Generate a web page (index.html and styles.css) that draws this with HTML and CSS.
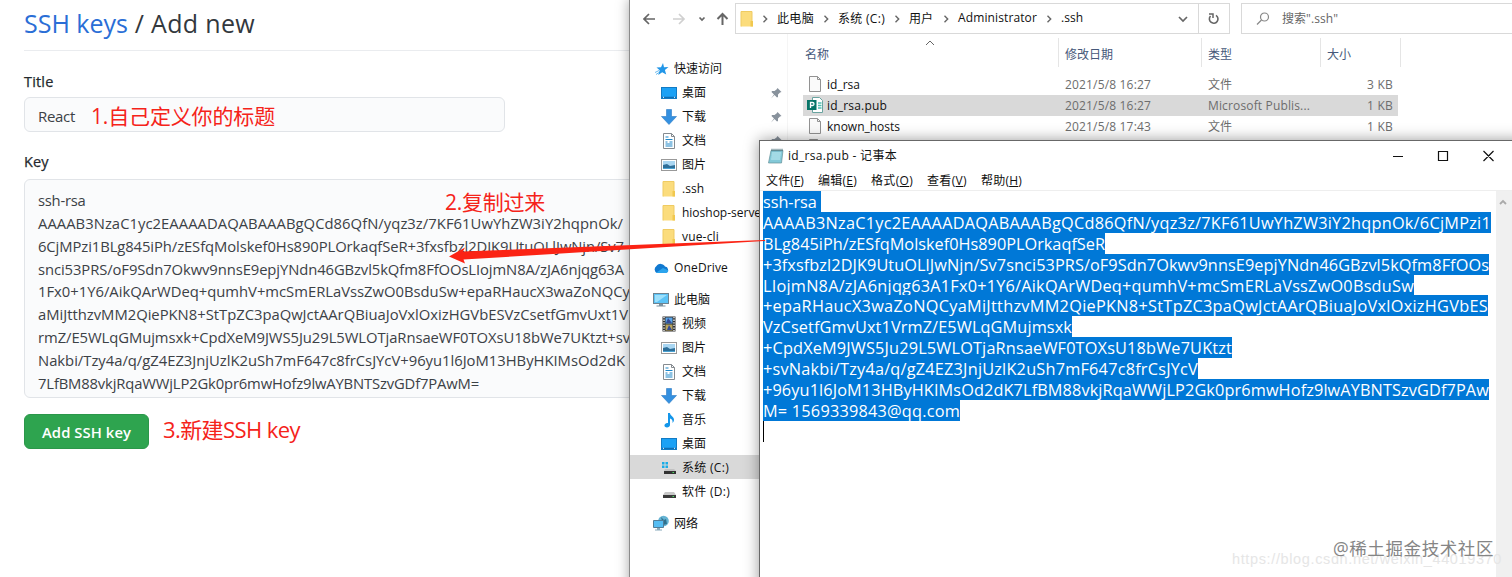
FILE: index.html
```html
<!DOCTYPE html>
<html lang="zh-CN">
<head>
<meta charset="utf-8">
<title>SSH keys</title>
<link rel="stylesheet" href="styles.css">
</head>
<body>
<svg class="sprite" width="0" height="0">
  <symbol id="star" viewBox="0 0 16 16"><path d="M10 2l1 4.300 4.500-.2-3.600 3 1.300 4.400-4-2.300-4 2.800 1.500-4.700L3.500 6.500l4.500-.2z" fill="#2196e8"/><path d="M2 11.500l4-2M3 13.500l3-2" stroke="#6cbcf0"/></symbol>
  <symbol id="desk" viewBox="0 0 16 16"><rect x=".5" y="2.500" width="15" height="11" fill="#1ba1f5" stroke="#127bc4"/><path d="M1 12.300h14" stroke="#0b62a4"/><path d="M2 12.300h1M13 12.300h1" stroke="#fff"/></symbol>
  <symbol id="down" viewBox="0 0 16 16"><path d="M5.500.5h5v7h5L8 15.500.5 7.500h5z" fill="#3490e0" stroke="#2a7bc4" stroke-width=".6"/></symbol>
  <symbol id="doc" viewBox="0 0 16 16"><path d="M2.500.5h8l3 3v12h-11z" fill="#fff" stroke="#858b90"/><path d="M4.500 4h3M4.500 6.500h7M4.500 9h2M8.500 9h3M4.500 11h7M4.500 13h7" stroke="#1d86c8" stroke-width="1.200"/><path d="M10.500.5v3h3" fill="none" stroke="#858b90"/></symbol>
  <symbol id="pic" viewBox="0 0 16 16"><rect x=".5" y="2.500" width="15" height="11" fill="#fff" stroke="#999"/><path d="M2 4h12v8H2z" fill="#a9d6f2"/><path d="M2 8l4-1 3 2 5-1v4H2z" fill="#2e6f99"/><path d="M2 11h12v1H2z" fill="#4ba2d2"/></symbol>
  <symbol id="folder" viewBox="0 0 16 16"><path d="M2 .5h11V10l1 .5v5H2z" fill="#fbdc7c"/><path d="M2 15.500V.5h11v9.500" fill="none" stroke="#efcb62"/><path d="M11.500 10h2.500v5.500h-2.500z" fill="#f1c84f"/></symbol>
  <symbol id="cloud" viewBox="0 0 16 16"><path d="M4 13a4 4 0 0 1-.5-7A5 5 0 0 1 12 6.500 3.400 3.400 0 0 1 13 13z" fill="#1179d0"/><path d="M3 12.700 10 8l5.500 2.500A3 3 0 0 1 13 13H4z" fill="#2ba4ed"/></symbol>
  <symbol id="pc" viewBox="0 0 16 16"><rect x=".5" y="1.500" width="15" height="10" fill="#5cc3f6" stroke="#6d8390"/><path d="M2 3h12L4 10H2z" fill="#9de0fb"/><path d="M6 12h4v1.500h2.500v1h-9v-1H6z" fill="#7e929e"/></symbol>
  <symbol id="video" viewBox="0 0 16 16"><path d="M1.500.5h13v15h-13z" fill="#333"/><path d="M3 1v14M13 1v14" stroke="#eee" stroke-width="1.400" stroke-dasharray="1.300 1.300"/><path d="M4.500 1.500h7v6h-7z" fill="#5ba6e8"/><path d="M4.500 8.500h7v6h-7z" fill="#b8a45d"/><path d="M7 2l4 5H5zM8 9l3 5H6z" fill="#354b96"/></symbol>
  <symbol id="music" viewBox="0 0 16 16"><path d="M7 1h2c0 3 4 3.500 4 7 0 1-.5 2-1.500 3 .5-3-1-4-2.500-4.500V13c0 1.500-1.500 2.500-3 2.500S3 14.500 3.500 13 5.500 11 7 11z" fill="#1496ea"/></symbol>
  <symbol id="cdrive" viewBox="0 0 16 16"><path d="M1 2h2.500v2.500H1zM4.500 2H7v2.500H4.500zM1 5.500h2.500V8H1zM4.500 5.500H7V8H4.500z" fill="#19ace7"/><path d="M4 9h9l2 2H3z" fill="#c2c2c2"/><path d="M3 11h12v3H3z" fill="#333"/><path d="M11.500 12.500H13" stroke="#4be060"/></symbol>
  <symbol id="ddrive" viewBox="0 0 16 16"><path d="M4 8h9l2 3H2z" fill="#c8c8c8"/><path d="M2 11h13v3H2z" fill="#3a3a3a"/><path d="M11.500 12.500H13" stroke="#4be060"/></symbol>
  <symbol id="net" viewBox="0 0 16 16"><circle cx="10.500" cy="6" r="5.300" fill="#65b3d3"/><path d="M8 2l3 3 2-1 1 5-4 1z" fill="#2d708e"/><path d="M.5 5.500h10v7H.5z" fill="#55bdf3" stroke="#507d98"/><path d="M4 13h3v1.500h2v1H2v-1h2z" fill="#8ab"/></symbol>
  <symbol id="file" viewBox="0 0 16 16"><path d="M2.500.5h8l3 3v12h-11z" fill="#fafafa" stroke="#929292"/><path d="M10.500.5v3h3" fill="none" stroke="#929292"/></symbol>
  <symbol id="pub" viewBox="0 0 16 16"><path d="M5.500.5h7l3 3v12h-10z" fill="#fff" stroke="#6aa4a0"/><path d="M11 6h3.500M11 8.500h3.500M11 11h3.500" stroke="#4cbdb0" stroke-width="1.500"/><path d="M0 3h9.500v10H0z" fill="#077568"/><path d="M3.500 11V5.500h2a1.500 1.500 0 0 1 0 3h-2" fill="none" stroke="#fff" stroke-width="1.300"/></symbol>
  <symbol id="note" viewBox="0 0 16 16"><path d="M3 2.500h12L13.500 15H.5z" fill="#83c9d8" stroke="#648f98" stroke-width=".7"/><path d="M4 5h9M3.700 7h9M3.400 9h9M3.100 11h9" stroke="#c3eaf2"/><path d="M3.500 2h11.500" stroke="#456c76" stroke-width="2.500" stroke-dasharray="1 1"/></symbol>
  <symbol id="pin" viewBox="0 0 12 12"><path d="M7.500 1l4 4-1.500.5-2 2 0 2.500-1 .5L4.500 8 1 11.500 4 7.500 1.500 5 2 4h2.500l2-1.500z" fill="#88929c"/></symbol>
  <symbol id="chev" viewBox="0 0 8 8"><path d="M2.500.8 5.700 4 2.500 7.200" fill="none" stroke="#666" stroke-width="1.400"/></symbol>
</svg>

<main class="desktop">
  <section class="github">
    <h1 class="heading"><span data-w="104"><a>SSH keys</a></span><span data-w="127"> / Add new</span></h1>
    <label class="label"><span data-w="29.500">Title</span></label>
    <div class="input"><span data-w="37">React</span></div>
    <label class="label label-key"><span data-w="24.500">Key</span></label>
    <div class="textarea">
      <p><span data-w="47.500">ssh-rsa</span></p>
      <p><span data-w="585">AAAAB3NzaC1yc2EAAAADAQABAAABgQCd86QfN/yqz3z/7KF61UwYhZW3iY2hqpnOk/</span></p>
      <p><span data-w="586">6CjMPzi1BLg845iPh/zESfqMolskef0Hs890PLOrkaqfSeR+3fxsfbzl2DJK9UtuOLlJwNjn/Sv7</span></p>
      <p><span data-w="586">snci53PRS/oF9Sdn7Okwv9nnsE9epjYNdn46GBzvl5kQfm8FfOOsLIojmN8A/zJA6njqg63A</span></p>
      <p><span data-w="592">1Fx0+1Y6/AikQArWDeq+qumhV+mcSmERLaVssZwO0BsduSw+epaRHaucX3waZoNQCy</span></p>
      <p><span data-w="590">aMiJtthzvMM2QiePKN8+StTpZC3paQwJctAArQBiuaJoVxlOxizHGVbESVzCsetfGmvUxt1V</span></p>
      <p><span data-w="592">rmZ/E5WLqGMujmsxk+CpdXeM9JWS5Ju29L5WLOTjaRnsaeWF0TOXsU18bWe7UKtzt+sv</span></p>
      <p><span data-w="587">Nakbi/Tzy4a/q/gZ4EZ3JnjUzlK2uSh7mF647c8frCsJYcV+96yu1l6JoM13HByHKIMsOd2dK</span></p>
      <p><span data-w="441">7LfBM88vkjRqaWWjLP2Gk0pr6mwHofz9lwAYBNTSzvGDf7PAwM=</span></p>
    </div>
    <button class="submit"><span data-w="89">Add SSH key</span></button>
  </section>

  <section class="explorer">
    <div class="navbar">
      <div class="arrows">
        <svg width="90" height="16" viewBox="0 0 90 16" fill="none" stroke-width="1.700">
          <path d="M12 8H1M6 3L1 8l5 5" stroke="#666"/><path d="M30 8h11M36 3l5 5-5 5" stroke="#d0d0d0"/><path d="M56.500 6.500l2.500 2.500 2.500-2.500" stroke="#666"/><path d="M79.500 14V3M74.500 8l5-5 5 5" stroke="#666" stroke-width="2"/>
        </svg>
      </div>
      <div class="address">
        <svg class="icon"><use href="#folder"/></svg>
        <svg class="chev"><use href="#chev"/></svg><span class="c1" data-w="37">此电脑</span>
        <svg class="chev"><use href="#chev"/></svg><span class="c2" data-w="47">系统 (C:)</span>
        <svg class="chev"><use href="#chev"/></svg><span class="c3" data-w="24">用户</span>
        <svg class="chev"><use href="#chev"/></svg><span class="c4" data-w="79">Administrator</span>
        <svg class="chev"><use href="#chev"/></svg><span data-w="22">.ssh</span>
        <svg class="drop" width="10" height="8" viewBox="0 0 10 8"><path d="M1 2l4 4 4-4" fill="none" stroke="#666" stroke-width="1.700"/></svg>
        <div class="refresh"><svg width="14" height="14" viewBox="0 0 14 14"><path d="M3.500 4a4.300 4.300 0 1 0 5.500-.7" fill="none" stroke="#666" stroke-width="1.600"/><path d="M2 2h4v4" fill="none" stroke="#666" stroke-width="1.500"/></svg></div>
      </div>
      <div class="search"><svg width="14" height="14" viewBox="0 0 14 14" fill="none" stroke="#888" stroke-width="1.200"><circle cx="8.500" cy="5" r="4"/><path d="M5.500 8L1 12.500"/></svg><span data-w="56">搜索".ssh"</span></div>
    </div>
    <div class="panes">
      <nav class="tree">
        <div class="node top"><svg class="icon"><use href="#star"/></svg><span>快速访问</span></div>
        <div class="node"><svg class="icon"><use href="#desk"/></svg><span>桌面</span><svg class="pin"><use href="#pin"/></svg></div>
        <div class="node"><svg class="icon"><use href="#down"/></svg><span>下载</span><svg class="pin"><use href="#pin"/></svg></div>
        <div class="node"><svg class="icon"><use href="#doc"/></svg><span>文档</span><svg class="pin"><use href="#pin"/></svg></div>
        <div class="node"><svg class="icon"><use href="#pic"/></svg><span>图片</span></div>
        <div class="node"><svg class="icon"><use href="#folder"/></svg><span data-w="22">.ssh</span></div>
        <div class="node"><svg class="icon"><use href="#folder"/></svg><span data-w="84">hioshop-server</span></div>
        <div class="node"><svg class="icon"><use href="#folder"/></svg><span data-w="37">vue-cli</span></div>
        <div class="node top gap"><svg class="icon"><use href="#cloud"/></svg><span data-w="54">OneDrive</span></div>
        <div class="node top gap"><svg class="icon"><use href="#pc"/></svg><span>此电脑</span></div>
        <div class="node"><svg class="icon"><use href="#video"/></svg><span>视频</span></div>
        <div class="node"><svg class="icon"><use href="#pic"/></svg><span>图片</span></div>
        <div class="node"><svg class="icon"><use href="#doc"/></svg><span>文档</span></div>
        <div class="node"><svg class="icon"><use href="#down"/></svg><span>下载</span></div>
        <div class="node"><svg class="icon"><use href="#music"/></svg><span>音乐</span></div>
        <div class="node"><svg class="icon"><use href="#desk"/></svg><span>桌面</span></div>
        <div class="node current"><svg class="icon"><use href="#cdrive"/></svg><span data-w="47">系统 (C:)</span></div>
        <div class="node"><svg class="icon"><use href="#ddrive"/></svg><span data-w="48">软件 (D:)</span></div>
        <div class="node top gap"><svg class="icon"><use href="#net"/></svg><span>网络</span></div>
      </nav>
      <div class="files">
        <div class="cols head"><div>名称<svg class="sort" width="10" height="6" viewBox="0 0 10 6"><path d="M1 5l4-4 4 4" fill="none" stroke="#666"/></svg></div><div>修改日期</div><div>类型</div><div>大小</div></div>
        <div class="cols row"><div><svg class="icon"><use href="#file"/></svg><span data-w="33">id_rsa</span></div><div><span data-w="86">2021/5/8 16:27</span></div><div>文件</div><div class="size"><span data-w="26">3 KB</span></div></div>
        <div class="cols row selected"><div><svg class="icon"><use href="#pub"/></svg><span data-w="60">id_rsa.pub</span></div><div><span data-w="86">2021/5/8 16:27</span></div><div><span data-w="102">Microsoft Publis...</span></div><div class="size"><span data-w="26">1 KB</span></div></div>
        <div class="cols row"><div><svg class="icon"><use href="#file"/></svg><span data-w="73">known_hosts</span></div><div><span data-w="86">2021/5/8 17:43</span></div><div>文件</div><div class="size"><span data-w="26">1 KB</span></div></div>
        <div class="cols row"><div><svg class="icon"><use href="#file"/></svg></div></div>
      </div>
    </div>
  </section>

  <section class="notepad">
    <header class="titlebar"><svg class="icon"><use href="#note"/></svg><span data-w="109">id_rsa.pub - 记事本</span>
      <svg class="controls" width="102" height="12" viewBox="0 0 102 12" fill="none" stroke="#111" stroke-width="1.200"><path d="M0 6.500h10M45.500 1.500h9v9h-9zM90.500 1l10 10M100.500 1l-10 10"/></svg>
    </header>
    <div class="menu"><span data-w="38">文件(<u>F</u>)</span><span data-w="39">编辑(<u>E</u>)</span><span data-w="42">格式(<u>O</u>)</span><span data-w="40">查看(<u>V</u>)</span><span data-w="41">帮助(<u>H</u>)</span></div>
    <div class="editor">
      <div class="text">
        <p><span data-w="58">ssh-rsa&nbsp;</span></p>
        <p><span data-w="728">AAAAB3NzaC1yc2EAAAADAQABAAABgQCd86QfN/yqz3z/7KF61UwYhZW3iY2hqpnOk/6CjMPzi1</span></p>
        <p><span data-w="342">BLg845iPh/zESfqMolskef0Hs890PLOrkaqfSeR</span></p>
        <p><span data-w="726">+3fxsfbzl2DJK9UtuOLlJwNjn/Sv7snci53PRS/oF9Sdn7Okwv9nnsE9epjYNdn46GBzvl5kQfm8FfOOs</span></p>
        <p><span data-w="651">LIojmN8A/zJA6njqg63A1Fx0+1Y6/AikQArWDeq+qumhV+mcSmERLaVssZwO0BsduSw</span></p>
        <p><span data-w="725">+epaRHaucX3waZoNQCyaMiJtthzvMM2QiePKN8+StTpZC3paQwJctAArQBiuaJoVxlOxizHGVbES</span></p>
        <p><span data-w="309">VzCsetfGmvUxt1VrmZ/E5WLqGMujmsxk</span></p>
        <p><span data-w="469">+CpdXeM9JWS5Ju29L5WLOTjaRnsaeWF0TOXsU18bWe7UKtzt</span></p>
        <p><span data-w="435">+svNakbi/Tzy4a/q/gZ4EZ3JnjUzlK2uSh7mF647c8frCsJYcV</span></p>
        <p><span data-w="726">+96yu1l6JoM13HByHKIMsOd2dK7LfBM88vkjRqaWWjLP2Gk0pr6mwHofz9lwAYBNTSzvGDf7PAw</span></p>
        <p><span data-w="197">M= 1569339843@qq.com</span></p>
        <i class="caret"></i>
      </div>
      <div class="scroll"><svg width="8" height="6" viewBox="0 0 8 6"><path d="M1 5l3-3 3 3" fill="none" stroke="#aaa" stroke-width="1.800"/></svg></div>
    </div>
  </section>

  <div class="mark m1"><span data-w="184">1.自己定义你的标题</span></div>
  <div class="mark m2"><span data-w="100">2.复制过来</span></div>
  <div class="mark m3"><span data-w="137">3.新建SSH key</span></div>
  <svg class="arrow" width="320" height="34" viewBox="0 0 320 34"><path d="M0 20.500L16 11.500l-2 4L316 4v1L14.500 23.500l1.500 4z" fill="#fb2314"/></svg>
  <div class="url"><span data-w="270">https://blog.csdn.net/weixin_44019370</span></div>
  <div class="credit"><span data-w="161">@稀土掘金技术社区</span></div>
</main>
<script src="fit.js"></script>
</body>
</html>
```
FILE: styles.css
```css
* { box-sizing: border-box; }
body { margin: 0; font-family: "Open Sans", "Noto Sans CJK SC", sans-serif; color: #24292e; }
p, h1 { margin: 0; font-weight: 400; }
span { white-space: pre; }
.sprite { position: absolute; }
.desktop { position: relative; width: 1512px; height: 577px; overflow: hidden; background: #fff; }

.github { width: 1000px; padding-left: 24px; }
.heading { height: 51px; padding-top: 6px; border-bottom: 1px solid #eaecef; color: #33383d; font: 400 25px/34px "Open Sans", sans-serif; }
.heading a { color: #2a6ed6; }
.label { display: flex; align-items: center; height: 20px; margin-top: 20px; font-size: 14.5px; font-weight: 500; -webkit-text-stroke: .25px; }
.label-key { margin-top: 19px; }
.input { display: flex; align-items: center; width: 481px; height: 35px; margin-top: 6px; padding: 2px 13px 0; border: 1px solid #e1e4e8; border-radius: 6px; background: #fafbfc; color: #3c4146; font-size: 15px; }
.textarea { height: 219px; margin-top: 8px; padding: 9px 13px; border: 1px solid #e1e4e8; border-radius: 6px; background: #fafbfc; color: #3c4146; font-size: 14.8px; }
.textarea p { height: 22.85px; line-height: 22.85px; }
.submit { display: flex; align-items: center; justify-content: center; width: 125px; height: 35px; margin-top: 16px; padding: 0; border: 1px solid #2b974a; border-radius: 6px; background: #2ea44f; color: #fff; font: 600 14.8px "Open Sans", sans-serif; }

.explorer { position: absolute; left: 629px; top: -1px; width: 900px; height: 600px; padding-top: 1px; border-left: 1px solid #8b8b8b; background: #fff; box-shadow: 0 0 12px rgba(0,0,0,.35); font-size: 12px; color: #111; }
.icon { width: 16px; height: 16px; flex: none; }
.navbar { display: flex; height: 34px; padding-top: 3px; }
.arrows { display: flex; align-items: center; width: 105px; padding-left: 13px; }
.address { display: flex; align-items: center; width: 495px; border: 1px solid #d9d9d9; padding-left: 3px; }
.address span, .search span { margin-top: -2px; }
.chev { width: 8px; height: 8px; margin-left: 6px; margin-right: 8px; flex: none; }
.c1, .c2, .c4 { margin-right: 2px; }
.c3 { margin-right: 3px; }
.drop { margin-left: auto; margin-right: 10px; }
.refresh { display: flex; align-items: center; justify-content: center; align-self: stretch; width: 31px; border-left: 1px solid #d9d9d9; }
.search { display: flex; align-items: center; gap: 12px; flex: 1; margin-left: 11px; padding-left: 14px; border: 1px solid #d9d9d9; color: #666; }
.panes { display: flex; height: 540px; }
.tree { width: 158px; height: 540px; padding-top: 22px; border-right: 1px solid #f5f5f5; }
.node { display: flex; align-items: center; gap: 5px; height: 24px; padding: 1px 5px 0 31px; }
.node.top { padding-left: 23px; }
.node.gap { margin-top: 7.5px; }
.node.current { background: #d9d9d9; }
.node span { margin-top: -1px; }
.pin { width: 12px; height: 12px; margin-left: auto; }
.files { flex: 1; padding: 4px 0 0 15px; }
.cols { display: grid; grid-template-columns: 256px 143px 119px 80px; width: 598px; }
.head { height: 36px; color: #46587a; }
.head div { position: relative; height: 29px; padding: 7px 0 0 6px; border-right: 1px solid #e5e5e5; line-height: 20px; margin-bottom: 7px; }
.head div:first-child { padding-left: 2px; }
.sort { position: absolute; left: 122px; top: 2px; }
.row { height: 21px; }
.row div { display: flex; align-items: center; gap: 4px; padding-left: 6px; padding-bottom: 1px; color: #6d6d6d; }
.row div:first-child { padding-left: 4px; color: #111; }
.row .icon { margin-top: 0; }
.row .size { justify-content: flex-end; padding-right: 8px; }
.selected { background: #d9d9d9; width: 595px; }
.selected .size { width: 77px; padding-right: 5px; }

.notepad { position: absolute; left: 759px; top: 140px; width: 770px; height: 450px; border: 1px solid #686868; background: #fff; box-shadow: 0 0 14px rgba(0,0,0,.4); color: #111; }
.titlebar { display: flex; align-items: center; gap: 4px; height: 30px; padding-left: 8px; font-size: 12px; }
.titlebar span { margin-top: -2px; }
.controls { margin-left: auto; margin-right: 33px; margin-top: -1px; }
.menu { display: flex; gap: 14px; height: 20px; padding-left: 6px; font-size: 12px; line-height: 20px; border-bottom: 1px solid #eee; }
.editor { display: flex; height: 390px; padding-left: 3px; }
.text { width: 733px; font-size: 16.3px; color: #fff; }
.text p { height: 20.9px; line-height: 20.9px; }
.text span { display: inline-block; height: 21px; background: #0078d7; vertical-align: top; line-height: 22px; }
.caret { display: block; width: 1px; height: 21px; background: #000; }
.scroll { width: 32px; padding-left: 3px; background: #f0f0f0; line-height: 16px; }

.mark { position: absolute; color: #f5231a; font-size: 21px; line-height: 30px; }
.m1 { left: 91px; top: 101px; }
.m2 { left: 445px; top: 187px; }
.m3 { left: 163px; top: 414px; font-size: 22px; }
.arrow { position: absolute; left: 449px; top: 236px; }
.url { position: absolute; left: 1232px; top: 548px; color: #e6e6e6; font: 14.5px/22px "Liberation Sans", sans-serif; }
.credit { position: absolute; left: 1333px; top: 535px; color: #858585; font-size: 17.5px; line-height: 26px; text-shadow: 0 0 1px #fff; }
```
FILE: fit.js
```js
// Spread each label's letters so that it takes the width given in data-w.
document.querySelectorAll('[data-w]').forEach(function (el) {
  var target = parseFloat(el.dataset.w);
  var natural = el.getBoundingClientRect().width;
  el.style.letterSpacing = (target - natural) / el.textContent.length + 'px';
});
```
